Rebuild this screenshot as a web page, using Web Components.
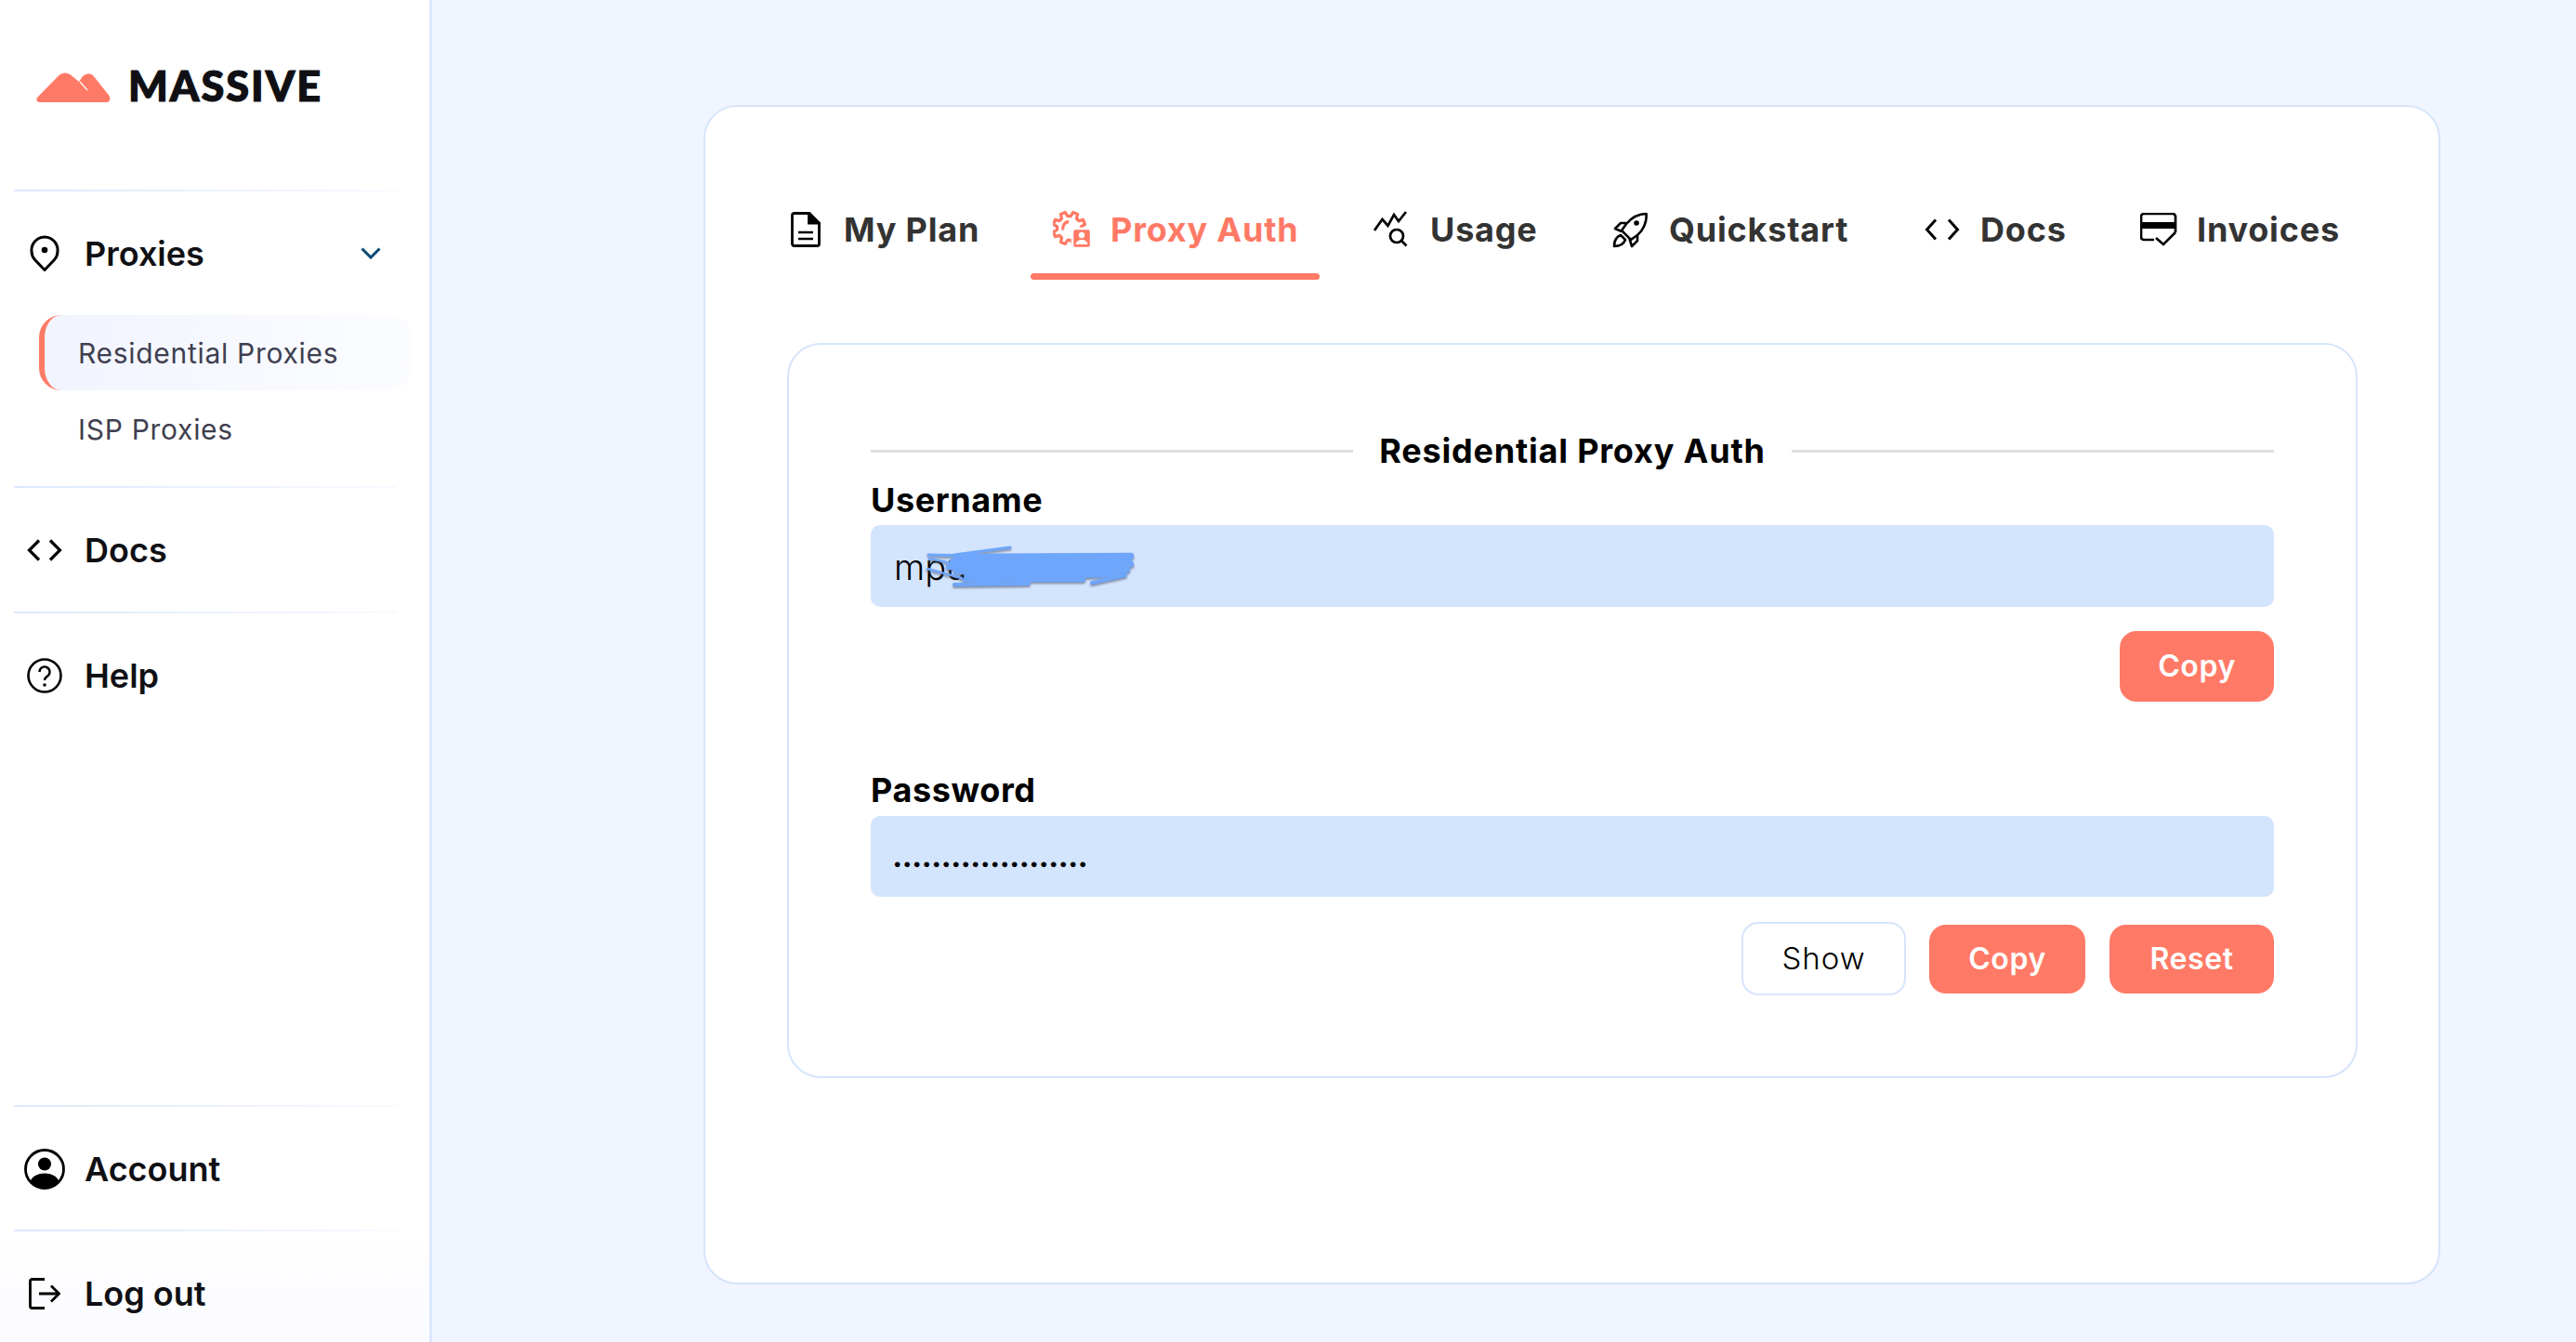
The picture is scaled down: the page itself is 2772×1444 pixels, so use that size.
<!DOCTYPE html>
<html lang="en"><head><meta charset="utf-8"><title>Massive</title>
<style>
html,body{margin:0;height:100%;overflow:hidden}
body{font-family:"Inter","Liberation Sans",sans-serif;background:#f0f5ff}
</style></head><body>
<app-shell>
  <side-bar slot="side">
    <brand-logo></brand-logo>
    <side-rule></side-rule>
    <nav-item chevron>
      <svg slot="icon" width="32" height="40" viewBox="0 0 32 40" fill="none" stroke="#000" stroke-width="3"><path d="M16 37.500 5.500 26.500A14 14 0 0 1 2 17 14 14 0 0 1 16 2 14 14 0 0 1 30 17 14 14 0 0 1 26.500 26.500Z" stroke-linejoin="round"/><circle cx="16" cy="16" r="3.300" fill="#000" stroke="none"/></svg>
      Proxies
    </nav-item>
    <sub-item active>Residential Proxies</sub-item>
    <sub-item style="height:83px">ISP Proxies</sub-item>
    <div style="height:20px;flex:none"></div>
    <side-rule></side-rule>
    <nav-item style="height:133px">
      <svg slot="icon" width="38" height="24" viewBox="0 0 38 24" fill="none" stroke="#000" stroke-width="3.200"><path d="M13 1.500 2.500 12 13 22.500M25 1.500 35.500 12 25 22.500"/></svg>
      Docs
    </nav-item>
    <side-rule></side-rule>
    <nav-item>
      <svg slot="icon" width="38" height="38" viewBox="0 0 38 38" fill="none" stroke="#000" stroke-width="2.600"><circle cx="19" cy="19" r="17.500"/><path d="M13.500 15a5.500 5.500 0 1 1 8.600 4.500c-2 1.300-3.100 2.300-3.100 4.500" stroke-width="2.400"/><circle cx="19" cy="29" r="1.800" fill="#000" stroke="none"/></svg>
      Help
    </nav-item>
    <div style="flex:1"></div>
    <side-rule></side-rule>
    <nav-item>
      <svg slot="icon" width="44" height="44" viewBox="0 0 44 44"><defs><clipPath id="acc"><circle cx="22" cy="22" r="20"/></clipPath></defs><circle cx="22" cy="22" r="20.500" fill="#fff" stroke="#000" stroke-width="2.800"/><circle cx="22" cy="16.500" r="7" fill="#000"/><ellipse cx="22" cy="37" rx="15.500" ry="10.500" fill="#000" clip-path="url(#acc)"/></svg>
      Account
    </nav-item>
    <side-rule></side-rule>
    <nav-item style="margin-bottom:-13px">
      <svg slot="icon" width="34" height="34" viewBox="0 0 34 34" fill="none" stroke="#000" stroke-width="2.800"><path d="M17 1.500H3.500a2 2 0 0 0-2 2v27a2 2 0 0 0 2 2H17"/><path d="M11 17h21M24 8.500 32.500 17 24 25.500"/></svg>
      Log out
    </nav-item>
  </side-bar>
  <main-card slot="main">
    <tab-bar>
      <tab-item w="145">
        <svg slot="icon" width="32" height="38" viewBox="0 0 32 38" fill="none" stroke="#000" stroke-width="2.800"><path d="M3 1.500H20L30.500 12V34.500a2 2 0 0 1-2 2H3.500a2 2 0 0 1-2-2V3.500a2 2 0 0 1 2-2Z"/><path d="M19.500 2 30 12H19.500Z" fill="#000"/><path d="M8 22H24M8 29H24" stroke-width="2.600"/></svg>
        My Plan
      </tab-item>
      <tab-item w="202" active>
        <gear-icon slot="icon"></gear-icon>
        Proxy Auth
      </tab-item>
      <tab-item w="115">
        <svg slot="icon" width="40" height="40" viewBox="0 0 40 40" fill="none" stroke="#000" stroke-width="2.700"><path d="M1 21 9.500 9 15.500 16 22 4 27 11 35 1"/><circle cx="25" cy="27" r="7"/><path d="M30 32 35.500 37.500"/></svg>
        Usage
      </tab-item>
      <tab-item w="193">
        <svg slot="icon" width="40" height="40" viewBox="0 0 40 40" fill="none" stroke="#000" stroke-width="2.600" stroke-linejoin="round"><path d="M36.500 3C28 3 20 8 15 14L10 21 20 31 27 26C33 21 37.500 12 36.500 3Z"/><circle cx="26" cy="13" r="2.800" fill="#000" stroke="none"/><path d="M15 13H9L3 19 10 22M27 25.500V32L21 38 18.500 30"/><path d="M9 26C4 28 2 33 2 38 7 38 12 36 14 31Z"/></svg>
        Quickstart
      </tab-item>
      <tab-item w="91">
        <svg slot="icon" width="38" height="24" viewBox="0 0 38 24" fill="none" stroke="#000" stroke-width="3"><path d="M12 1.500 2.500 12 12 22.500M26 1.500 35.500 12 26 22.500"/></svg>
        Docs
      </tab-item>
      <tab-item w="150">
        <svg slot="icon" width="40" height="36" viewBox="0 0 40 36" fill="none" stroke="#000" stroke-width="2.700"><path d="M15 29H4a3 3 0 0 1-3-3V4a3 3 0 0 1 3-3h31a3 3 0 0 1 3 3V21"/><rect x="1" y="10" width="37" height="7" fill="#000" stroke="none"/><path d="M17 27 25 34 38 21"/></svg>
        Invoices
      </tab-item>
    </tab-bar>
    <auth-panel>
      <section-title>Residential Proxy Auth</section-title>
      <auth-field label="Username" style="--gap:5px;--row-gap:26px">
        <field-box slot="box" scribble value="mpu"></field-box>
        <app-button w="166" h="76">Copy</app-button>
      </auth-field>
      <auth-field label="Password" style="--top:73px;--gap:6px;--row-gap:27px;--box-h:87px">
        <field-box slot="box" dots value="••••••••••••••••••••"></field-box>
        <app-button ghost w="177" h="79">Show</app-button>
        <app-button w="168" h="74">Copy</app-button>
        <app-button w="177" h="74" style="margin-left:1px">Reset</app-button>
      </auth-field>
    </auth-panel>
  </main-card>
</app-shell>
<script>
function def(name, css, html, extra){
  customElements.define(name, class extends HTMLElement{
    constructor(){super();this.attachShadow({mode:'open'}).innerHTML='<style>'+css+'</style>'+html;}
    connectedCallback(){ if(extra) extra.call(this); }
  });
}
function gearPath(cx,cy,R,r,n){
  let d='';
  for(let k=0;k<n;k++){
    const a=(k*360/n+22.5)*Math.PI/180, s=2*Math.PI/n;
    const pts=[[r,a-s*.34],[R,a-s*.19],[R,a+s*.19],[r,a+s*.34]];
    pts.forEach((p,i)=>{d+=((k===0&&i===0)?'M':'L')+(cx+p[0]*Math.cos(p[1])).toFixed(2)+' '+(cy+p[0]*Math.sin(p[1])).toFixed(2);});
  }
  return d+'Z';
}
def('app-shell',':host{display:flex;height:1444px;width:2772px;overflow:hidden}','<slot name="side"></slot><slot name="main"></slot>');
def('side-bar',':host{display:flex;flex-direction:column;box-sizing:border-box;width:465px;height:1444px;flex:none;background:linear-gradient(180deg,#fff 92%,#fafbff);border-right:3px solid #dbe7fd}','<slot></slot>');
def('brand-logo',':host{display:flex;align-items:flex-start;flex:none;height:204px;box-sizing:border-box;padding:73px 0 0 39px;gap:19px}svg{margin-top:5px;flex:none}span{font:900 45px/40px "Lato","Inter",sans-serif;color:#101014;letter-spacing:2px;margin-top:-1px;-webkit-text-stroke:1.200px #101014}',
 '<svg width="80" height="32" viewBox="0 0 80 32"><path d="M1 27 25 2.500Q31-1.500 37 2.500L46 10 50 4Q56-1 61 3L78.500 25Q81 31 76 32H3Q-1 31 1 27Z" fill="#ff7a66"/><path d="M47 10 55 19" stroke="#fff" stroke-width="1.200"/></svg><span>MASSIVE</span>');
def('side-rule',':host{display:block;flex:none;height:2px;margin:0 35px 0 15px;background:linear-gradient(90deg,#dde8fe,#f8faff)}','');
def('nav-item',':host{display:flex;align-items:center;flex:none;height:132px;box-sizing:border-box;padding:1px 0 0 18px;font:600 36px/1 "Inter",sans-serif;color:#101014;position:relative}.i{width:60px;display:flex;justify-content:center;margin-right:13px;flex:none}.c{position:absolute;left:388px;top:60px;display:none}:host([chevron]) .c{display:block}',
 '<span class="i"><slot name="icon"></slot></span><slot></slot><svg class="c" width="22" height="13" viewBox="0 0 22 13" fill="none" stroke="#0b4873" stroke-width="3"><path d="M1.500 1.500 11 11 20.500 1.500"/></svg>');
def('sub-item',':host{display:flex;align-items:center;flex:none;box-sizing:border-box;height:82px;width:401px;margin-left:42px;padding-left:42px;font:400 30px/1 "Inter",sans-serif;color:#3f3f50;letter-spacing:.7px}:host([active]){height:81px;margin-top:1px;background:linear-gradient(100deg,#f1f4ff,#fcfdff);border-left:6px solid #ff7a66;border-radius:24px;padding-left:36px}','<slot></slot>');
def('gear-icon',':host{display:block;width:42px;height:44px}svg{display:block}','<svg width="42" height="44" viewBox="0 0 42 44" fill="none" stroke="#ff7a66" stroke-width="3.300" stroke-linejoin="round"><path class="g"/><path d="M17 13.500a7 7 0 0 0-6 9"/><rect x="21" y="21" width="20" height="21" rx="3" fill="#ff7a66" stroke="#fff" stroke-width="2.500"/><circle cx="31" cy="28" r="3.200" fill="#fff" stroke="none"/><path d="M24.500 38a6.500 5 0 0 1 13 0Z" fill="#fff" stroke="none"/></svg>',
 function(){this.shadowRoot.querySelector('.g').setAttribute('d',gearPath(17.5,20.5,17.5,13,8));});
def('main-card',':host{display:block;box-sizing:border-box;width:1869px;height:1269px;margin:113px 0 0 292px;background:#fff;border:2px solid #d6e5fb;border-radius:36px;padding-top:96px}','<slot></slot>');
def('tab-bar',':host{display:flex;padding-left:63px;gap:33px}','<slot></slot>');
def('tab-item',':host{display:flex;flex-direction:column;flex:none;font:700 36px/1 "Inter",sans-serif;letter-spacing:.8px;color:#333}:host([active]){color:#ff7a66}.r{display:flex;align-items:center;height:72px;padding:0 23px 0 25px}.i{width:40px;display:flex;justify-content:center;margin-right:21px;flex:none}.l{white-space:nowrap}.b{height:7px;margin-top:11px;border-radius:4px}:host([active]) .b{background:#ff7a66}',
 '<div class="r"><span class="i"><slot name="icon"></slot></span><span class="l"><slot></slot></span></div><div class="b"></div>',
 function(){this.shadowRoot.querySelector('.l').style.width=this.getAttribute('w')+'px';});
def('auth-panel',':host{display:block;box-sizing:border-box;height:791px;margin:68px 87px 0 88px;border:2px solid #d6e5fb;border-radius:36px;padding:92px 88px 0}','<slot></slot>');
def('section-title',':host{display:flex;align-items:center;height:44px;font:700 36px/44px "Inter",sans-serif;letter-spacing:.8px;color:#000;gap:28px;white-space:nowrap}i{flex:1;height:3px;background:#dedede}','<i></i><slot></slot><i></i>');
def('auth-field',':host{display:block;padding-top:var(--top,9px)}.l{height:44px;font:700 36px/44px "Inter",sans-serif;letter-spacing:.6px;color:#000}.g{height:var(--gap)}.a{display:flex;justify-content:flex-end;align-items:center;gap:25px;margin-top:var(--row-gap)}',
 '<div class="l"></div><div class="g"></div><slot name="box"></slot><div class="a"><slot></slot></div>',
 function(){this.shadowRoot.querySelector('.l').textContent=this.getAttribute('label');});
def('field-box',':host{display:block;position:relative;box-sizing:border-box;height:var(--box-h,88px);background:#d3e4fd;border-radius:10px;padding-left:25px;font:300 38px/90px "Inter",sans-serif;color:#000;overflow:hidden}:host([dots]) span{font:400 21px/80px "Liberation Sans",sans-serif;letter-spacing:3.150px}svg{position:absolute;left:58px;top:18px;filter:drop-shadow(0 2px 1px rgba(60,70,95,.55))}',
 '<span></span><svg width="232" height="52" viewBox="0 0 232 52" fill="none" stroke="#6ea6fb" stroke-linecap="round" style="display:none"><path d="M32 14 92 6 M4 14 50 15" stroke-width="3"/><path d="M34 16 222 15M30 21 220 20M26 27 222 24M34 32 218 30M46 37 214 35M60 40 170 40" stroke-width="6.500"/><path d="M3 29 40 39M5 18 34 24" stroke-width="2.500"/><path d="M32 46 112 45M42 41 80 44M180 44 216 36" stroke-width="4"/></svg>',
 function(){const s=this.shadowRoot;s.querySelector('span').textContent=this.getAttribute('value'); if(this.hasAttribute('scribble')) s.querySelector('svg').style.display='block';});
def('app-button',':host{display:flex;align-items:center;justify-content:center;flex:none;box-sizing:border-box;background:#ff7a66;color:#fff;border-radius:18px;font:600 32px/1 "Inter",sans-serif;letter-spacing:.6px}:host([ghost]){background:#fff;color:#000;border:2px solid #d6e5fb;font-weight:300;font-size:33px;letter-spacing:1px}','<slot></slot>',
 function(){this.style.width=this.getAttribute('w')+'px';this.style.height=this.getAttribute('h')+'px';});
</script>
</body></html>
